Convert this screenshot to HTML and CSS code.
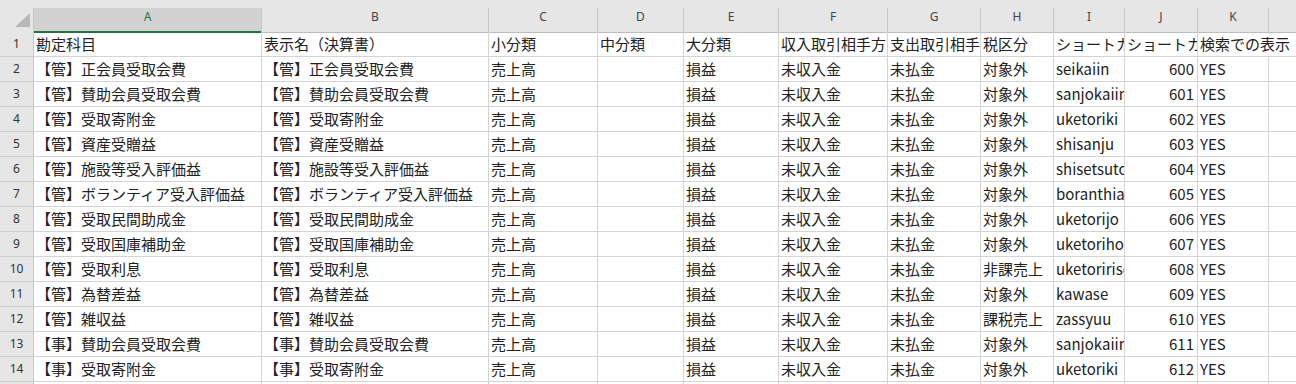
FILE: index.html
```html
<!DOCTYPE html>
<html lang="ja">
<head>
    <meta charset="UTF-8">
    <title>勘定科目一覧</title>
    <link rel="stylesheet" href="styles.css">
</head>
<body>
    <div class="sheet">
        <div class="topbar"></div>

        <div class="row heads">
            <div class="corner">
                <svg width="34" height="24" viewBox="0 0 34 24"><polygon points="15,19 30,19 30,5" fill="#b8b8b8"/></svg>
            </div>
            <div class="colhead selected">A</div>
            <div class="colhead">B</div>
            <div class="colhead">C</div>
            <div class="colhead">D</div>
            <div class="colhead">E</div>
            <div class="colhead">F</div>
            <div class="colhead">G</div>
            <div class="colhead">H</div>
            <div class="colhead">I</div>
            <div class="colhead">J</div>
            <div class="colhead">K</div>
            <div class="colhead"></div>
        </div>

        <div class="row">
            <div class="rownum">1</div>
            <div class="cell">勘定科目</div>
            <div class="cell">表示名（決算書）</div>
            <div class="cell">小分類</div>
            <div class="cell">中分類</div>
            <div class="cell">大分類</div>
            <div class="cell">収入取引相手方</div>
            <div class="cell">支出取引相手方</div>
            <div class="cell">税区分</div>
            <div class="cell">ショートカット名</div>
            <div class="cell">ショートカットコード</div>
            <div class="cell spill">検索での表示</div>
        </div>

        <div class="row">
            <div class="rownum">2</div>
            <div class="cell">【管】正会員受取会費</div>
            <div class="cell">【管】正会員受取会費</div>
            <div class="cell">売上高</div>
            <div class="cell"></div>
            <div class="cell">損益</div>
            <div class="cell">未収入金</div>
            <div class="cell">未払金</div>
            <div class="cell">対象外</div>
            <div class="cell">seikaiin</div>
            <div class="cell num">600</div>
            <div class="cell">YES</div>
            <div class="cell"></div>
        </div>

        <div class="row">
            <div class="rownum">3</div>
            <div class="cell">【管】賛助会員受取会費</div>
            <div class="cell">【管】賛助会員受取会費</div>
            <div class="cell">売上高</div>
            <div class="cell"></div>
            <div class="cell">損益</div>
            <div class="cell">未収入金</div>
            <div class="cell">未払金</div>
            <div class="cell">対象外</div>
            <div class="cell">sanjokaiin</div>
            <div class="cell num">601</div>
            <div class="cell">YES</div>
            <div class="cell"></div>
        </div>

        <div class="row">
            <div class="rownum">4</div>
            <div class="cell">【管】受取寄附金</div>
            <div class="cell">【管】受取寄附金</div>
            <div class="cell">売上高</div>
            <div class="cell"></div>
            <div class="cell">損益</div>
            <div class="cell">未収入金</div>
            <div class="cell">未払金</div>
            <div class="cell">対象外</div>
            <div class="cell">uketoriki</div>
            <div class="cell num">602</div>
            <div class="cell">YES</div>
            <div class="cell"></div>
        </div>

        <div class="row">
            <div class="rownum">5</div>
            <div class="cell">【管】資産受贈益</div>
            <div class="cell">【管】資産受贈益</div>
            <div class="cell">売上高</div>
            <div class="cell"></div>
            <div class="cell">損益</div>
            <div class="cell">未収入金</div>
            <div class="cell">未払金</div>
            <div class="cell">対象外</div>
            <div class="cell">shisanju</div>
            <div class="cell num">603</div>
            <div class="cell">YES</div>
            <div class="cell"></div>
        </div>

        <div class="row">
            <div class="rownum">6</div>
            <div class="cell">【管】施設等受入評価益</div>
            <div class="cell">【管】施設等受入評価益</div>
            <div class="cell">売上高</div>
            <div class="cell"></div>
            <div class="cell">損益</div>
            <div class="cell">未収入金</div>
            <div class="cell">未払金</div>
            <div class="cell">対象外</div>
            <div class="cell">shisetsutou</div>
            <div class="cell num">604</div>
            <div class="cell">YES</div>
            <div class="cell"></div>
        </div>

        <div class="row">
            <div class="rownum">7</div>
            <div class="cell">【管】ボランティア受入評価益</div>
            <div class="cell">【管】ボランティア受入評価益</div>
            <div class="cell">売上高</div>
            <div class="cell"></div>
            <div class="cell">損益</div>
            <div class="cell">未収入金</div>
            <div class="cell">未払金</div>
            <div class="cell">対象外</div>
            <div class="cell">boranthia</div>
            <div class="cell num">605</div>
            <div class="cell">YES</div>
            <div class="cell"></div>
        </div>

        <div class="row">
            <div class="rownum">8</div>
            <div class="cell">【管】受取民間助成金</div>
            <div class="cell">【管】受取民間助成金</div>
            <div class="cell">売上高</div>
            <div class="cell"></div>
            <div class="cell">損益</div>
            <div class="cell">未収入金</div>
            <div class="cell">未払金</div>
            <div class="cell">対象外</div>
            <div class="cell">uketorijo</div>
            <div class="cell num">606</div>
            <div class="cell">YES</div>
            <div class="cell"></div>
        </div>

        <div class="row">
            <div class="rownum">9</div>
            <div class="cell">【管】受取国庫補助金</div>
            <div class="cell">【管】受取国庫補助金</div>
            <div class="cell">売上高</div>
            <div class="cell"></div>
            <div class="cell">損益</div>
            <div class="cell">未収入金</div>
            <div class="cell">未払金</div>
            <div class="cell">対象外</div>
            <div class="cell">uketoriho</div>
            <div class="cell num">607</div>
            <div class="cell">YES</div>
            <div class="cell"></div>
        </div>

        <div class="row">
            <div class="rownum">10</div>
            <div class="cell">【管】受取利息</div>
            <div class="cell">【管】受取利息</div>
            <div class="cell">売上高</div>
            <div class="cell"></div>
            <div class="cell">損益</div>
            <div class="cell">未収入金</div>
            <div class="cell">未払金</div>
            <div class="cell">非課売上</div>
            <div class="cell">uketoririsoku</div>
            <div class="cell num">608</div>
            <div class="cell">YES</div>
            <div class="cell"></div>
        </div>

        <div class="row">
            <div class="rownum">11</div>
            <div class="cell">【管】為替差益</div>
            <div class="cell">【管】為替差益</div>
            <div class="cell">売上高</div>
            <div class="cell"></div>
            <div class="cell">損益</div>
            <div class="cell">未収入金</div>
            <div class="cell">未払金</div>
            <div class="cell">対象外</div>
            <div class="cell">kawase</div>
            <div class="cell num">609</div>
            <div class="cell">YES</div>
            <div class="cell"></div>
        </div>

        <div class="row">
            <div class="rownum">12</div>
            <div class="cell">【管】雑収益</div>
            <div class="cell">【管】雑収益</div>
            <div class="cell">売上高</div>
            <div class="cell"></div>
            <div class="cell">損益</div>
            <div class="cell">未収入金</div>
            <div class="cell">未払金</div>
            <div class="cell">課税売上</div>
            <div class="cell">zassyuu</div>
            <div class="cell num">610</div>
            <div class="cell">YES</div>
            <div class="cell"></div>
        </div>

        <div class="row">
            <div class="rownum">13</div>
            <div class="cell">【事】賛助会員受取会費</div>
            <div class="cell">【事】賛助会員受取会費</div>
            <div class="cell">売上高</div>
            <div class="cell"></div>
            <div class="cell">損益</div>
            <div class="cell">未収入金</div>
            <div class="cell">未払金</div>
            <div class="cell">対象外</div>
            <div class="cell">sanjokaiin</div>
            <div class="cell num">611</div>
            <div class="cell">YES</div>
            <div class="cell"></div>
        </div>

        <div class="row">
            <div class="rownum">14</div>
            <div class="cell">【事】受取寄附金</div>
            <div class="cell">【事】受取寄附金</div>
            <div class="cell">売上高</div>
            <div class="cell"></div>
            <div class="cell">損益</div>
            <div class="cell">未収入金</div>
            <div class="cell">未払金</div>
            <div class="cell">対象外</div>
            <div class="cell">uketoriki</div>
            <div class="cell num">612</div>
            <div class="cell">YES</div>
            <div class="cell"></div>
        </div>

        <!-- next row, only its top edge is on screen -->
        <div class="row">
            <div class="rownum"></div>
            <div class="cell"></div>
            <div class="cell"></div>
            <div class="cell"></div>
            <div class="cell"></div>
            <div class="cell"></div>
            <div class="cell"></div>
            <div class="cell"></div>
            <div class="cell"></div>
            <div class="cell"></div>
            <div class="cell"></div>
            <div class="cell"></div>
            <div class="cell"></div>
        </div>
    </div>
</body>
</html>
```

FILE: styles.css
```css
body {
    margin: 0;
    background: #fff;
    overflow: hidden;
}
.sheet {
    width: 1296px;
    height: 384px;
    overflow: hidden;
    font-family: "Noto Sans CJK JP", "Noto Sans", sans-serif;
    color: #222;
}
.topbar {
    height: 8px;
    background: #e6e6e6;
}
.row {
    display: grid;
    grid-template-columns: 34px 228px 227px 109px 86px 95px 109px 93px 73px 71px 73px 71px 28px;
    height: 25px;
}
.heads {
    height: 24px;
}
.corner {
    background: #e6e6e6;
    border-right: 1px solid #c6c6c6;
    border-bottom: 1px solid #bdbdbd;
    box-sizing: border-box;
}
.corner svg {
    display: block;
}
.colhead {
    background: #e6e6e6;
    border-right: 1px solid #c6c6c6;
    border-bottom: 1px solid #bdbdbd;
    box-sizing: border-box;
    font-family: "Noto Sans", sans-serif;
    font-size: 12px;
    line-height: 16px;
    padding-top: 1px;
    color: #444;
    text-align: center;
}
.colhead.selected {
    background: #d2d2d2;
    color: #217346;
    border-bottom: none;
    box-shadow: inset 0 -2px 0 #217346;
}
.rownum {
    background: #e6e6e6;
    border-right: 1px solid #c6c6c6;
    border-bottom: 1px solid #d0d0d0;
    box-sizing: border-box;
    font-family: "Noto Sans", sans-serif;
    font-size: 12px;
    line-height: 24px;
    color: #333;
    text-align: center;
}
.cell {
    border-right: 1px solid #d4d4d4;
    border-bottom: 1px solid #d4d4d4;
    box-sizing: border-box;
    font-size: 15px;
    line-height: 24px;
    padding: 0 3px 0 2px;
    white-space: nowrap;
    overflow: hidden;
}
.cell.num {
    text-align: right;
}
/* text that runs on into the empty column to its right */
.cell.spill {
    grid-column: span 2;
}
```
